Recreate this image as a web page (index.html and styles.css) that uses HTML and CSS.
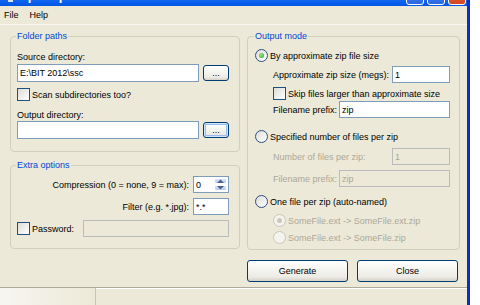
FILE: index.html
```html
<!DOCTYPE html>
<html lang="en">
<head>
  <meta charset="UTF-8" />
  <title>SplitZip</title>
  <link rel="stylesheet" href="styles.css">
</head>
<body>
  <div class="window">
    <div class="titlebar">
      <div class="title"><span class="app-icon"></span>SplitZip</div>
      <div class="caption-buttons">
        <span class="cap-btn"></span>
        <span class="cap-btn"></span>
        <span class="cap-btn close"></span>
      </div>
    </div>
    <div class="menubar">
      <span>File</span>
      <span>Help</span>
    </div>

    <div class="client">
      <div class="column">
        <!-- Folder paths -->
        <fieldset class="group folder-group">
          <legend>Folder paths</legend>
          <div class="label">Source directory:</div>
          <div class="path-row">
            <input class="field" value="E:\BIT 2012\ssc">
            <button class="btn browse">...</button>
          </div>
          <div class="option scan-row"><span class="check"></span>Scan subdirectories too?</div>
          <div class="label out-label">Output directory:</div>
          <div class="path-row out-row">
            <input class="field" value="">
            <button class="btn browse focus">...</button>
          </div>
        </fieldset>

        <!-- Extra options -->
        <fieldset class="group extra-group">
          <legend>Extra options</legend>
          <div class="value-row">
            <span>Compression (0 = none, 9 = max):</span>
            <div class="spin">
              <input class="spin-input" value="0">
              <div class="spin-arrows">
                <span class="spin-btn"><svg width="7" height="4" viewBox="0 0 7 4"><path d="M0 4L3.5 0.5L7 4Z" fill="#4D6185"/></svg></span>
                <span class="spin-btn"><svg width="7" height="4" viewBox="0 0 7 4"><path d="M0 0L3.5 3.5L7 0Z" fill="#4D6185"/></svg></span>
              </div>
            </div>
          </div>
          <div class="value-row">
            <span>Filter (e.g. *.jpg):</span>
            <input class="field small" value="*.*">
          </div>
          <div class="value-row password-row">
            <div class="option"><span class="check"></span>Password:</div>
            <input class="field password" value="" disabled>
          </div>
        </fieldset>
      </div>

      <div class="column">
        <!-- Output mode -->
        <fieldset class="group output-group">
          <legend>Output mode</legend>
          <div class="option"><span class="radio on"></span>By approximate zip file size</div>
          <div class="sub-row size-row">
            <span>Approximate zip size (megs):</span>
            <input class="field num" value="1">
          </div>
          <div class="option sub skip-row"><span class="check"></span>Skip files larger than approximate size</div>
          <div class="sub-row prefix-row">
            <span>Filename prefix:</span>
            <input class="field prefix" value="zip">
          </div>

          <div class="option radio2"><span class="radio"></span>Specified number of files per zip</div>
          <div class="sub-row disabled count-row">
            <span>Number of files per zip:</span>
            <input class="field num" value="1" disabled>
          </div>
          <div class="sub-row disabled prefix2-row">
            <span>Filename prefix:</span>
            <input class="field prefix" value="zip" disabled>
          </div>

          <div class="option radio3"><span class="radio"></span>One file per zip (auto-named)</div>
          <div class="option sub disabled auto1"><span class="radio on"></span>SomeFile.ext -&gt; SomeFile.ext.zip</div>
          <div class="option sub disabled auto2"><span class="radio"></span>SomeFile.ext -&gt; SomeFile.zip</div>
        </fieldset>

        <div class="actions">
          <button class="btn action">Generate</button>
          <button class="btn action">Close</button>
        </div>
      </div>
    </div>

    <div class="statusbar">
      <div class="status-panel"></div>
      <div class="status-panel wide"></div>
    </div>
  </div>
</body>
</html>
```

FILE: styles.css
```css
* {
  box-sizing: border-box;
}
body {
  margin: 0;
  background: #fff;
  font-family: "Liberation Sans", Arial, sans-serif;
  font-size: 9px;
  color: #000;
}
.window {
  width: 470px;
  height: 305px;
  background: #ECE9D8;
  border-right: 3px solid #0A2FC8;
  display: flex;
  flex-direction: column;
  overflow: hidden;
}

/* title bar, only its bottom edge is in view */
.titlebar {
  height: 6px;
  flex: none;
  background: linear-gradient(#1466F0, #0054E3);
  display: flex;
  align-items: flex-start;
  justify-content: space-between;
  overflow: hidden;
}
.title {
  color: #fff;
  font-weight: bold;
  font-size: 13px;
  line-height: 14px;
  margin-top: -11px;
  padding-left: 8px;
  display: flex;
  align-items: center;
  gap: 6px;
}
.app-icon {
  width: 5px;
  height: 12px;
  background: #D8E4F8;
}
.caption-buttons {
  display: flex;
  gap: 3px;
  padding-right: 1px;
}
.cap-btn {
  width: 18px;
  height: 21px;
  margin-top: -16px;
  border: 1px solid #fff;
  border-radius: 3px;
  background: linear-gradient(#5C95F8, #2A66E0);
}
.cap-btn.close {
  background: linear-gradient(#E9805C, #D5461F);
}

.menubar {
  height: 19px;
  flex: none;
  display: flex;
  align-items: center;
  gap: 11px;
  padding: 0 0 1px 4px;
  border-bottom: 1px solid #F8F7F1;
}

.client {
  flex: 1;
  display: grid;
  grid-template-columns: 230px 213px;
  column-gap: 7px;
  align-items: start;
  padding: 5px 7px 0 10px;
}
.column {
  display: flex;
  flex-direction: column;
  gap: 7px;
}

/* group boxes */
.group {
  margin: 0;
  min-width: 0;
  border: 1px solid #D0D0BF;
  border-radius: 4px;
}
.group legend {
  color: #0046D5;
  line-height: 12px;
  padding: 0 1px;
  margin-left: -1px;
}
.folder-group {
  padding: 9px 10px 12px 6px;
}
.extra-group {
  padding: 5px 10px 11px 6px;
}
.output-group {
  padding: 7px 9px 5px 7px;
}

.label {
  line-height: 12px;
}
.out-label {
  margin-top: 8px;
}
.path-row {
  display: flex;
  align-items: center;
  gap: 4px;
  margin-top: 1px;
}
.out-row {
  margin-top: 0;
}
.scan-row {
  margin-top: 6px;
}

/* text boxes */
.field {
  height: 18px;
  min-width: 0;
  flex: 1;
  border: 1px solid #7F9DB9;
  background: #fff;
  font: inherit;
  color: #000;
  padding: 0 2px;
  outline: none;
}
.field:disabled {
  background: #ECE9D8;
  border-color: #B8BCBD;
  color: #ACA899;
}
.field.small {
  flex: none;
  width: 36px;
  height: 17px;
}
.field.password {
  flex: none;
  width: 146px;
  height: 17px;
  margin-left: auto;
}
.field.num {
  flex: none;
  width: 58px;
  height: 17px;
}
.field.prefix {
  flex: none;
  width: 111px;
  height: 17px;
}

/* buttons */
.btn {
  font: inherit;
  color: #000;
  padding: 0;
  border: 1px solid #003C74;
  border-radius: 3px;
  background: linear-gradient(#FFFFFF 0%, #F5F5F1 40%, #ECEBE6 80%, #D6D0C5 100%);
}
.btn.browse {
  width: 26px;
  height: 16px;
  line-height: 10px;
}
.btn.focus {
  box-shadow: inset 0 0 0 1px #CEE7FF, inset 0 0 0 2px #9CBAEC;
}

/* check boxes and radios */
.option {
  display: flex;
  align-items: center;
  gap: 2px;
  height: 13px;
}
.check {
  width: 13px;
  height: 13px;
  flex: none;
  border: 1px solid #1C5180;
  background: linear-gradient(135deg, #DCDCD7, #FFFFFF);
}
.radio {
  width: 13px;
  height: 13px;
  flex: none;
  border: 1px solid #2F4F7F;
  border-radius: 50%;
  background: linear-gradient(135deg, #DCDCD7, #FFFFFF);
  display: flex;
  align-items: center;
  justify-content: center;
}
.radio.on::after {
  content: "";
  width: 5px;
  height: 5px;
  border-radius: 50%;
  background: radial-gradient(circle at 40% 40%, #9BEA86, #21A121);
}
.disabled {
  color: #ACA899;
}
.disabled .radio {
  border-color: #CAC8BB;
  background: #F4F3EE;
}
.disabled .radio.on::after {
  background: #CAC8BB;
}

/* extra options rows */
.value-row {
  display: flex;
  align-items: center;
  justify-content: flex-end;
  gap: 4px;
  height: 17px;
}
.value-row + .value-row {
  margin-top: 5px;
}
.password-row {
  justify-content: flex-start;
}
.spin {
  width: 36px;
  height: 17px;
  border: 1px solid #7F9DB9;
  background: #fff;
  display: flex;
}
.spin-input {
  flex: 1;
  min-width: 0;
  border: none;
  outline: none;
  font: inherit;
  padding: 0 2px;
}
.spin-arrows {
  width: 15px;
  display: flex;
  flex-direction: column;
  gap: 1px;
  padding: 1px;
}
.spin-btn {
  flex: 1;
  display: flex;
  align-items: center;
  justify-content: center;
  border-radius: 2px;
  background: linear-gradient(#D6E2FC, #B7CBF6);
  border: 1px solid #fff;
}

/* output mode rows */
.sub-row {
  display: flex;
  align-items: center;
  justify-content: space-between;
  height: 17px;
  padding-left: 18px;
}
.option.sub {
  padding-left: 18px;
}
.size-row {
  margin-top: 4px;
}
.skip-row {
  margin-top: 4px;
}
.prefix-row {
  margin-top: 1px;
}
.radio2 {
  margin-top: 12px;
}
.count-row {
  margin-top: 5px;
}
.prefix2-row {
  margin-top: 5px;
}
.radio3 {
  margin-top: 8px;
}
.auto1 {
  margin-top: 6px;
}
.auto2 {
  margin-top: 4px;
}

.actions {
  display: flex;
  gap: 9px;
  margin-top: 3px;
}
.btn.action {
  width: 101px;
  height: 22px;
}

.statusbar {
  height: 18px;
  flex: none;
  display: flex;
  border-top: 1px solid #ADAA9C;
  box-shadow: inset 0 1px #FFFFFF;
}
.status-panel {
  width: 96px;
  border-right: 1px solid #C6C3B3;
  background: linear-gradient(90deg, #F7F6F0, #ECE9D8);
}
.status-panel.wide {
  flex: 1;
  background: none;
  border-right: none;
}
```
